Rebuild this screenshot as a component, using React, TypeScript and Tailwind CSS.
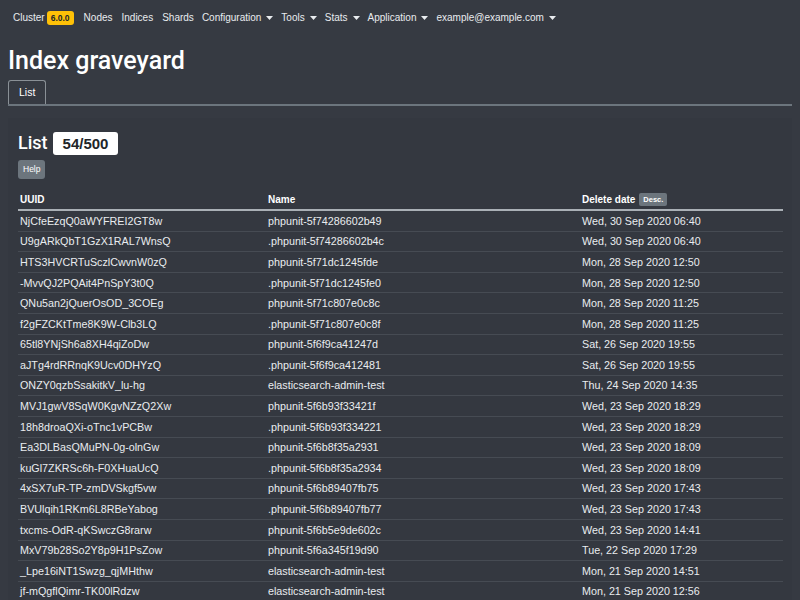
import React from "react";

const rows: [string, string, string][] = [
  ["NjCfeEzqQ0aWYFREI2GT8w", "phpunit-5f74286602b49", "Wed, 30 Sep 2020 06:40"],
  ["U9gARkQbT1GzX1RAL7WnsQ", ".phpunit-5f74286602b4c", "Wed, 30 Sep 2020 06:40"],
  ["HTS3HVCRTuSczlCwvnW0zQ", "phpunit-5f71dc1245fde", "Mon, 28 Sep 2020 12:50"],
  ["-MvvQJ2PQAit4PnSpY3t0Q", ".phpunit-5f71dc1245fe0", "Mon, 28 Sep 2020 12:50"],
  ["QNu5an2jQuerOsOD_3COEg", "phpunit-5f71c807e0c8c", "Mon, 28 Sep 2020 11:25"],
  ["f2gFZCKtTme8K9W-Clb3LQ", ".phpunit-5f71c807e0c8f", "Mon, 28 Sep 2020 11:25"],
  ["65tl8YNjSh6a8XH4qiZoDw", "phpunit-5f6f9ca41247d", "Sat, 26 Sep 2020 19:55"],
  ["aJTg4rdRRnqK9Ucv0DHYzQ", ".phpunit-5f6f9ca412481", "Sat, 26 Sep 2020 19:55"],
  ["ONZY0qzbSsakitkV_lu-hg", "elasticsearch-admin-test", "Thu, 24 Sep 2020 14:35"],
  ["MVJ1gwV8SqW0KgvNZzQ2Xw", "phpunit-5f6b93f33421f", "Wed, 23 Sep 2020 18:29"],
  ["18h8droaQXi-oTnc1vPCBw", ".phpunit-5f6b93f334221", "Wed, 23 Sep 2020 18:29"],
  ["Ea3DLBasQMuPN-0g-olnGw", "phpunit-5f6b8f35a2931", "Wed, 23 Sep 2020 18:09"],
  ["kuGl7ZKRSc6h-F0XHuaUcQ", ".phpunit-5f6b8f35a2934", "Wed, 23 Sep 2020 18:09"],
  ["4xSX7uR-TP-zmDVSkgf5vw", "phpunit-5f6b89407fb75", "Wed, 23 Sep 2020 17:43"],
  ["BVUlqih1RKm6L8RBeYabog", ".phpunit-5f6b89407fb77", "Wed, 23 Sep 2020 17:43"],
  ["txcms-OdR-qKSwczG8rarw", "phpunit-5f6b5e9de602c", "Wed, 23 Sep 2020 14:41"],
  ["MxV79b28So2Y8p9H1PsZow", "phpunit-5f6a345f19d90", "Tue, 22 Sep 2020 17:29"],
  ["_Lpe16iNT1Swzg_qjMHthw", "elasticsearch-admin-test", "Mon, 21 Sep 2020 14:51"],
  ["jf-mQgflQimr-TK00lRdzw", "elasticsearch-admin-test", "Mon, 21 Sep 2020 12:56"],
];

function Caret() {
  return (
    <svg width="7" height="4" viewBox="0 0 7 4" className="ml-[5px] inline-block">
      <path d="M0 0 L7 0 L3.5 4 Z" fill="#e9ecef" />
    </svg>
  );
}

export default function App() {
  return (
    <div
      className="h-[600px] overflow-hidden bg-[#363a42] text-[#e9ecef]"
      style={{ fontFamily: "'Liberation Sans', Arial, sans-serif" }}
    >
      <nav className="flex items-center h-[35px] pl-[13px] text-[10px] text-[#e9ecef]">
        <span className="flex items-center">
          Cluster
          <span className="ml-[2px] bg-[#ffc107] text-[#212529] text-[8.5px] font-bold rounded-[3px] px-[4px] h-[14px] leading-[14px]">
            6.0.0
          </span>
        </span>
        <span className="ml-[10px]">Nodes</span>
        <span className="ml-[9px]">Indices</span>
        <span className="ml-[9px]">Shards</span>
        <span className="ml-[8px] flex items-center">Configuration<Caret /></span>
        <span className="ml-[8px] flex items-center">Tools<Caret /></span>
        <span className="ml-[8px] flex items-center">Stats<Caret /></span>
        <span className="ml-[8px] flex items-center">Application<Caret /></span>
        <span className="ml-[8px] flex items-center">example@example.com<Caret /></span>
      </nav>
      <div className="px-[8px]">
        <h1
          className="text-[25px] font-medium leading-[32px] mt-[10px] text-white"
          style={{ fontFamily: "Roboto, 'Liberation Sans', sans-serif" }}
        >
          Index graveyard
        </h1>
        <div className="mt-[3px] flex border-b-[2px] border-[#6c757d]">
          <div className="border border-b-0 border-[#8a9096] rounded-t-[3px] h-[24px] px-[10px] flex items-center text-[10.5px] text-white">
            List
          </div>
        </div>
        <div className="mt-[12px] bg-[#343840] px-[10px] pt-[12px]">
          <div className="flex items-center h-[26px]">
            <span
              className="text-[18px] font-medium text-white leading-[26px]"
              style={{ fontFamily: "Roboto, 'Liberation Sans', sans-serif" }}
            >
              List
            </span>
            <span className="ml-[5px] bg-white text-[#212529] rounded-[3px] text-[15px] font-bold px-[10px] h-[23px] leading-[23px]">
              54/500
            </span>
          </div>
          <div className="mt-[4px] flex">
            <span className="flex items-center bg-[#6c757d] text-white rounded-[3px] text-[8.5px] h-[19px] px-[5px]">
              Help
            </span>
          </div>
          <div className="mt-[11px] w-[765px] text-[10.75px]">
            <div className="flex items-center h-[21px] border-b-[2px] border-[#aab0b6] font-bold text-white text-[10px]">
              <div className="w-[250px] pl-[2px]">UUID</div>
              <div className="w-[314px]">Name</div>
              <div className="flex items-center">
                Delete date
                <span className="ml-[4px] bg-[#6c757d] text-white rounded-[2px] text-[7.5px] h-[13px] px-[4px] flex items-center">
                  Desc.
                </span>
              </div>
            </div>
            {rows.map((r, i) => (
              <div
                key={i}
                className="flex items-center h-[20.6px] border-b border-[#464b53] text-[#e9ecef]"
              >
                <div className="w-[250px] pl-[2px]">{r[0]}</div>
                <div className="w-[314px]">{r[1]}</div>
                <div>{r[2]}</div>
              </div>
            ))}
          </div>
        </div>
      </div>
    </div>
  );
}
